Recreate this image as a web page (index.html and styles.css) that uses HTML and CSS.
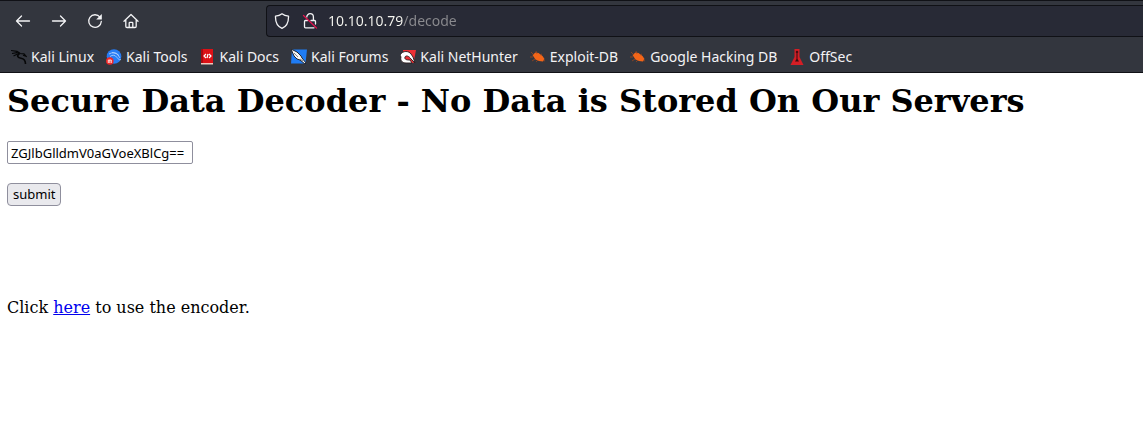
FILE: index.html
```html
<!DOCTYPE html>
<html lang="en">
<head>
<meta charset="utf-8">
<title>Secure Data Decoder</title>
<link rel="stylesheet" href="styles.css">
</head>
<body>
<header class="browser">
  <nav class="toolbar" aria-label="Navigation">
    <div class="nav-buttons">
      <button class="nav-button" type="button" aria-label="Back">
        <svg viewBox="0 0 16 16"><path d="M14.500 8H1.500M6.500 3l-5 5 5 5"/></svg>
      </button>
      <button class="nav-button" type="button" aria-label="Forward">
        <svg viewBox="0 0 16 16"><path d="M1.500 8H14.500M9.500 3l5 5-5 5"/></svg>
      </button>
      <button class="nav-button" type="button" aria-label="Reload">
        <svg viewBox="0 0 16 16"><path d="M13 4.200A6.300 6.300 0 1 0 14.300 8.500"/><path class="solid" d="M14.800 1v5.600H9.200z"/></svg>
      </button>
      <button class="nav-button" type="button" aria-label="Home">
        <svg viewBox="0 0 16 16"><path d="M1 8.300L8 1.500l7 6.800M2.800 7v6.300q0 1.200 1.200 1.200h8q1.200 0 1.200-1.200V7M6.200 14.500V10q0-.7.7-.7h2.200q.7 0 .7.7v4.500"/></svg>
      </button>
    </div>
    <div class="address">
      <svg class="address-icon" viewBox="0 0 16 16" aria-hidden="true"><path d="M8 .8c1.900 1.500 4 2.100 6.500 2.300C14.700 9 13 13.200 8 15.300 3 13.200 1.300 9 1.500 3.100 4 2.900 6.100 2.300 8 .8z"/></svg>
      <svg class="address-icon" viewBox="0 0 16 16" aria-hidden="true"><path d="M4.800 4a3.300 3.300 0 0 1 6.600 0v3.500M9 7.500h3.500q1 0 1 1V11M12 14.800H3.500q-1 0-1-1V8.500q0-1 1-1h2"/><path class="strike" d="M1.500 2.500l13 12.500"/></svg>
      <input class="address-input" type="text" aria-label="Address" value="10.10.10.79/decode">
    </div>
  </nav>
  <nav class="bookmarks" aria-label="Bookmarks">
    <a class="bookmark" href="#"><svg viewBox="0 0 16 16"><g fill="none" stroke="#060708"><path d="M0 1.500l6 .8 3 2M1 4.500l5-.8M2.500 7l5-2.500M5 2.500l4 2 4 .3 2 2.500-3-1" stroke-width="1.200"/><path d="M8.500 4.500C5 7 7 9 10 9.300c3 .4 4.500 2 4.500 5.700" stroke-width="1.600"/></g></svg>Kali Linux</a>
    <a class="bookmark" href="#"><svg viewBox="0 0 16 16"><circle cx="8" cy="7.500" r="7.300" fill="#267cf4"/><path d="M3 5q5-3 9 1l2 3M4 7.500q4-3 7 1t4 2M6 3.500q5 0 7 3" fill="none" stroke="#b7d5ff" stroke-width=".8"/><circle cx="3.800" cy="12" r="3.800" fill="#ef2828"/><path d="M2.300 14v-3h3v3M3.800 11v3" fill="none" stroke="#fff" stroke-width=".8"/></svg>Kali Tools</a>
    <a class="bookmark" href="#"><svg viewBox="0 0 16 16"><path d="M1 0h12v14H1z" fill="#dc1116"/><path d="M1 0h2v14H1z" fill="#a9080f"/><path d="M1 14h12v1.500H1z" fill="#f1c8bd"/><path d="M6 5L4 7l2 2M9 5l2 2-2 2M8 5L7 9" fill="none" stroke="#fff" stroke-width="1.200"/></svg>Kali Docs</a>
    <a class="bookmark" href="#"><svg viewBox="0 0 16 16"><path d="M1 0.500h15l-1.500 14H0z" fill="#1f7cf4"/><path d="M0 0l6 3 4 4 1 2 4 5-1 1-5-4-3-1-3-3z" fill="#f4f5f7" stroke="#23252b" stroke-width="1"/><path d="M3 4l4 4M9 10l3 2" fill="none" stroke="#555" stroke-width=".7"/></svg>Kali Forums</a>
    <a class="bookmark" href="#"><svg viewBox="0 0 16 16"><path d="M3 1h13l-2.500 13H5z" fill="#ee3035"/><path d="M0 6c3-5 9-4 11-1l2 3 2 6-4-4C9 7 6 6 5 8c-1 3 3 3 5 3l2 3H6C2 14 0 11 1 8z" fill="#fff" stroke="#281b1d" stroke-width=".9"/></svg>Kali NetHunter</a>
    <a class="bookmark" href="#"><svg viewBox="0 0 16 16"><path d="M2.500 6l3-2.500 3 .5 4 3 2 3-1.500 2.500-4-.5-3.500-1.500z" fill="#f36518"/><path d="M4 6L1 3M7 5L6 2M10 6l2-1M3 8L0 8M5 10l-3 2M8 11l-2 2M13 11l2 1" fill="none" stroke="#a9491a" stroke-width=".7"/></svg>Exploit-DB</a>
    <a class="bookmark" href="#"><svg viewBox="0 0 16 16"><path d="M2.500 6l3-2.500 3 .5 4 3 2 3-1.500 2.500-4-.5-3.500-1.500z" fill="#f36518"/><path d="M4 6L1 3M7 5L6 2M10 6l2-1M3 8L0 8M5 10l-3 2M8 11l-2 2M13 11l2 1" fill="none" stroke="#a9491a" stroke-width=".7"/></svg>Google Hacking DB</a>
    <a class="bookmark" href="#"><svg viewBox="0 0 16 16"><path d="M5.500 0h5v8l4 8H1.500l4-8z" fill="#d51e25"/><path d="M8 1.500l1.500 1.500-1 1v6l1.500 2.500H6L7.500 10V4l-1-1z" fill="#390b10"/></svg>OffSec</a>
  </nav>
</header>
<main class="page">
  <h1 class="title">Secure Data Decoder - No Data is Stored On Our Servers</h1>
  <form class="decoder">
    <input class="data-input" type="text" aria-label="Data to decode" value="ZGJlbGlldmV0aGVoeXBlCg==">
    <button class="submit" type="submit">submit</button>
  </form>
  <p class="hint">Click <a href="#">here</a> to use the encoder.</p>
</main>
</body>
</html>
```
FILE: styles.css
```css
* {
  box-sizing: border-box;
}

body {
  margin: 0;
  background: #fff;
  color: #000;
  font-family: "DejaVu Serif", serif;
  font-size: 16px;
  overflow-x: hidden;
}

.browser {
  background: #33363e;
  border-top: 1px solid #101116;
  border-bottom: 1px solid #101116;
  color: #f3f3f5;
  font-family: "Noto Sans", sans-serif;
}

.toolbar {
  display: flex;
  align-items: center;
  padding: 4px 0 4px 5px;
}

.nav-buttons {
  display: flex;
  flex: 0 0 261px;
}

.nav-button {
  display: grid;
  place-items: center;
  width: 36px;
  height: 32px;
  padding: 0;
  border: 0;
  background: none;
  color: inherit;
}

.nav-button svg,
.address-icon {
  flex: none;
  width: 16px;
  height: 16px;
  fill: none;
  stroke: currentColor;
  stroke-width: 1.3;
  stroke-linecap: round;
  stroke-linejoin: round;
}

.nav-button .solid {
  fill: currentColor;
  stroke: none;
}

.address {
  display: flex;
  flex: 1;
  align-items: center;
  gap: 12px;
  height: 32px;
  padding-left: 7px;
  border: 1px solid #101116;
  border-right: 0;
  border-radius: 4px 0 0 4px;
  background: #282a36;
}

.address .strike {
  stroke: #e1134e;
}

.address-input {
  flex: 1;
  min-width: 0;
  height: 24px;
  margin-left: -2px;
  padding: 0;
  border: 0;
  outline: 0;
  background: linear-gradient(to right, #f8f8f2 75px, #8b8b8f 75px);
  background-clip: text;
  -webkit-text-fill-color: transparent;
  font: 14px/24px "Noto Sans", sans-serif;
}

.bookmarks {
  display: flex;
  align-items: center;
  gap: 12px;
  height: 31px;
  padding: 0 11px;
}

.bookmark {
  display: flex;
  align-items: center;
  gap: 4px;
  color: inherit;
  font-size: 14px;
  line-height: 20px;
  text-decoration: none;
  white-space: nowrap;
}

.bookmark svg {
  flex: none;
  width: 16px;
  height: 16px;
}

.page {
  padding: 9px 7px;
}

.title {
  margin: 0 0 21px;
  font-size: 32px;
  line-height: 38px;
}

.decoder {
  display: flex;
  flex-direction: column;
  align-items: flex-start;
  gap: 19px;
}

.data-input,
.submit {
  height: 23px;
  border: 1px solid #8f8f9d;
  color: #000;
  font: 13px/19px "Noto Sans", sans-serif;
}

.data-input {
  width: 186px;
  padding: 1px 3px;
  border-radius: 2px;
  background: #fff;
}

.submit {
  padding: 1px 5px;
  border-radius: 4px;
  background: #e9e9ed;
}

.hint {
  margin: 92px 0 0;
  line-height: 19px;
}

.hint a {
  color: #0000ee;
}
```
